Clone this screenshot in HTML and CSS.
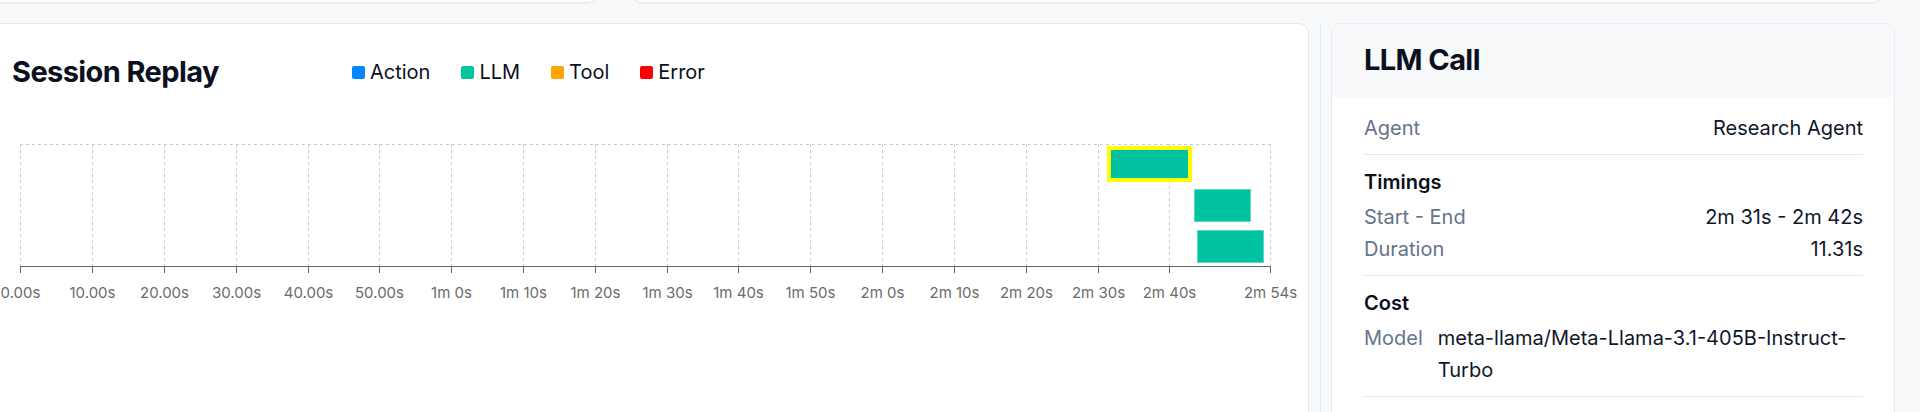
FILE: index.html
```html
<!DOCTYPE html>
<html lang="en">
<head>
<meta charset="utf-8">
<title>Session Replay</title>
<link rel="stylesheet" href="styles.css">
</head>
<body>
<div class="page">
  <div class="top-row">
    <div class="top-card top-card-left"></div>
    <div class="top-card top-card-right"></div>
  </div>
  <div class="main">
    <section class="replay-card">
      <div class="replay-header">
        <h2 class="title replay-title">Session Replay</h2>
        <ul class="legend">
          <li class="legend-item"><span class="swatch swatch-action"></span>Action</li>
          <li class="legend-item"><span class="swatch swatch-llm"></span>LLM</li>
          <li class="legend-item"><span class="swatch swatch-tool"></span>Tool</li>
          <li class="legend-item"><span class="swatch swatch-error"></span>Error</li>
        </ul>
      </div>
      <svg class="timeline" width="1300" height="230" viewBox="0 0 1300 230" xmlns="http://www.w3.org/2000/svg">
        <g class="grid" fill="none" stroke="#cccccc" stroke-width="1" stroke-dasharray="3 3">
          <path d="M20 54.5H1270.5"/>
          <path d="M20.5 54V176M92.5 54V176M164.5 54V176M236.5 54V176M308.5 54V176M379.5 54V176M451.5 54V176M523.5 54V176M595.5 54V176M667.5 54V176M738.5 54V176M810.5 54V176M882.5 54V176M954.5 54V176M1026.5 54V176M1098.5 54V176M1169.5 54V176M1270.5 54V176"/>
        </g>
        <g class="axis" fill="none" stroke="#666666" stroke-width="1">
          <path d="M20 176.5H1271"/>
          <path d="M20.5 176V183M92.5 176V183M164.5 176V183M236.5 176V183M308.5 176V183M379.5 176V183M451.5 176V183M523.5 176V183M595.5 176V183M667.5 176V183M738.5 176V183M810.5 176V183M882.5 176V183M954.5 176V183M1026.5 176V183M1098.5 176V183M1169.5 176V183M1270.5 176V183"/>
        </g>
        <g class="tick-labels" text-anchor="middle">
          <text x="20.5" y="208">0.00s</text>
          <text x="92.5" y="208">10.00s</text>
          <text x="164.5" y="208">20.00s</text>
          <text x="236.5" y="208">30.00s</text>
          <text x="308.5" y="208">40.00s</text>
          <text x="379.5" y="208">50.00s</text>
          <text x="451.5" y="208">1m 0s</text>
          <text x="523.5" y="208">1m 10s</text>
          <text x="595.5" y="208">1m 20s</text>
          <text x="667.5" y="208">1m 30s</text>
          <text x="738.5" y="208">1m 40s</text>
          <text x="810.5" y="208">1m 50s</text>
          <text x="882.5" y="208">2m 0s</text>
          <text x="954.5" y="208">2m 10s</text>
          <text x="1026.5" y="208">2m 20s</text>
          <text x="1098.5" y="208">2m 30s</text>
          <text x="1169.5" y="208">2m 40s</text>
          <text x="1270.5" y="208">2m 54s</text>
        </g>
        <g class="bars">
          <rect x="1109" y="58" width="81" height="32" fill="#00C49F" stroke="#FFFF00" stroke-width="4"/>
          <rect x="1194.5" y="99.5" width="56" height="32" fill="#00C49F" stroke="#5fd8bf" stroke-width="1"/>
          <rect x="1197.5" y="140.5" width="66" height="32" fill="#00C49F" stroke="#5fd8bf" stroke-width="1"/>
        </g>
      </svg>
    </section>
    <div class="splitter"></div>
    <aside class="detail-card">
      <header class="detail-header">
        <h2 class="title">LLM Call</h2>
      </header>
      <div class="detail-body">
        <div class="section">
          <div class="row"><span class="label">Agent</span><span class="value">Research Agent</span></div>
        </div>
        <div class="section">
          <h3 class="section-title">Timings</h3>
          <div class="row"><span class="label">Start - End</span><span class="value">2m 31s - 2m 42s</span></div>
          <div class="row"><span class="label">Duration</span><span class="value">11.31s</span></div>
        </div>
        <div class="section">
          <h3 class="section-title">Cost</h3>
          <div class="row"><span class="label">Model</span><span class="value value-wrap">meta-llama/Meta-Llama-3.1-405B-Instruct-Turbo</span></div>
        </div>
      </div>
    </aside>
  </div>
</div>
</body>
</html>
```

FILE: styles.css
```css
* {
  box-sizing: border-box;
}

html,
body {
  margin: 0;
  padding: 0;
  height: 412px;
  overflow: hidden;
}

body {
  background: #f8f9fb;
  font-family: Inter, "Noto Sans", sans-serif;
  color: #0f172a;
}

.page {
  margin-left: -20px;
  width: 1915px;
}

.top-row {
  display: flex;
  gap: 34px;
  margin-top: -40px;
  height: 43px;
}

.top-card {
  background: #ffffff;
  border: 1px solid #e5e7eb;
  border-radius: 10px;
  box-shadow: 0 1px 2px rgba(15, 23, 42, 0.05);
}

.top-card-left {
  width: 618px;
}

.top-card-right {
  width: 1250px;
}

.main {
  display: flex;
  align-items: flex-start;
  margin-top: 20px;
}

.replay-card {
  width: 1329px;
  height: 420px;
  background: #ffffff;
  border: 1px solid #e5e7eb;
  border-radius: 10px;
  padding: 30px 0 0 31px;
  overflow: hidden;
}

.replay-header {
  display: flex;
  align-items: center;
  height: 36px;
}

.title {
  margin: 0;
  font-size: 29px;
  line-height: 36px;
  font-weight: 700;
  letter-spacing: -0.6px;
  color: #0b1020;
}

.replay-title {
  width: 340px;
  flex: none;
}

.legend {
  display: flex;
  gap: 31px;
  list-style: none;
  margin: 0;
  padding: 0;
}

.legend-item {
  display: flex;
  align-items: center;
  gap: 5px;
  font-size: 20px;
  line-height: 28px;
  color: #0b1020;
}

.swatch {
  width: 13px;
  height: 13px;
  border-radius: 2px;
}

.swatch-action { background: #0088fe; }
.swatch-llm { background: #00c49f; }
.swatch-tool { background: #ffa500; }
.swatch-error { background: #ff0000; }

.timeline {
  display: block;
  margin-left: -12px;
}

.tick-labels text {
  font-family: Inter, "Noto Sans", sans-serif;
  font-size: 15px;
  fill: #6b6b6b;
}

.splitter {
  width: 1px;
  align-self: stretch;
  height: 400px;
  background: #e2e8f0;
  margin: 0 10px 0 11px;
}

.detail-card {
  width: 564px;
  height: 420px;
  background: #ffffff;
  border: 1px solid #e8ebef;
  border-radius: 10px;
  overflow: hidden;
}

.detail-header {
  background: #f8f9fb;
  height: 73px;
  padding: 18px 32px 0;
}

.detail-body {
  padding: 4px 31px 0 32px;
}

.section {
  padding: 11px 0 10px;
  border-bottom: 1px solid #e2e8f0;
}

.section-title {
  margin: 0 0 3px;
  font-size: 20px;
  line-height: 32px;
  font-weight: 600;
  color: #0b1020;
}

.row {
  display: flex;
  justify-content: space-between;
  gap: 15px;
  font-size: 20px;
  line-height: 32px;
}

.label {
  color: #64748b;
  flex: none;
}

.value {
  color: #0f172a;
  text-align: right;
}

.value-wrap {
  text-align: left;
}
```
